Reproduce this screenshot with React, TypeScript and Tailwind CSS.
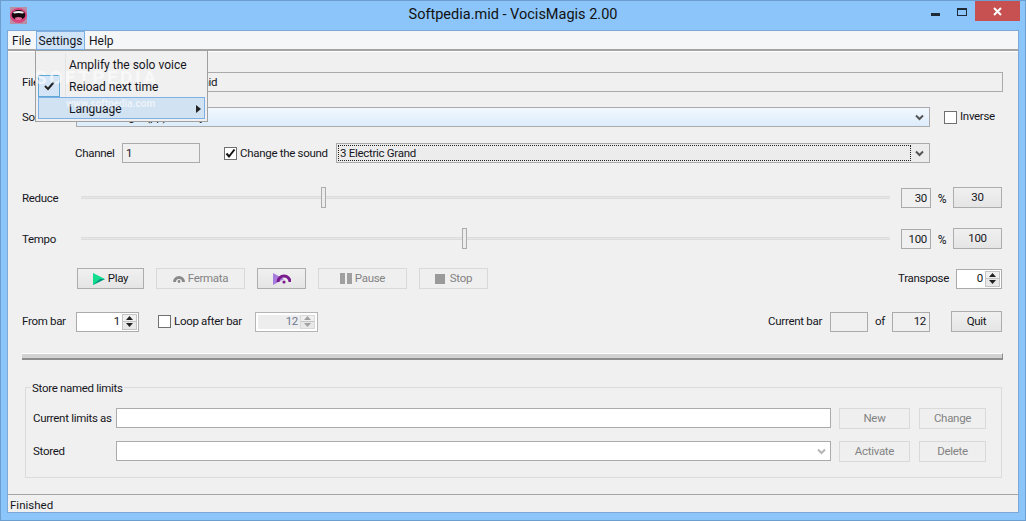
import React from "react";

const txt = "text-[#16161c]";

const Btn = ({ label, w, off, children }: any) => (
	<div
		className={`h-[21px] flex items-center justify-center gap-[3px] border ${w} ${
			off
				? "border-[#d9d9d9] bg-[#efefef] text-[#838383]"
				: "border-[#adadad] bg-gradient-to-b from-[#f0f0f0] to-[#e5e5e5] text-[#16161c]"
		}`}
	>
		{children}
		{label && <span>{label}</span>}
	</div>
);

const Check = ({ on }: any) => (
	<div className="w-[13px] h-[13px] border border-[#707070] bg-white flex items-center justify-center">
		{on && (
			<svg width="11" height="11" viewBox="0 0 11 11">
				<path d="M1.5 5.5 L4 8.5 L9.5 1.5" fill="none" stroke="#111" strokeWidth="2" />
			</svg>
		)}
	</div>
);

const Chevron = ({ color = "#555" }: any) => (
	<svg width="9" height="7" viewBox="0 0 9 7" className="shrink-0">
		<path d="M1 1.5 L4.5 5 L8 1.5" fill="none" stroke={color} strokeWidth="2" />
	</svg>
);

const Spin = ({ value, w, off }: any) => (
	<div
		className={`h-[20px] border flex items-stretch justify-end ${w} ${
			off ? "border-[#b5b5b5] bg-white p-[2px]" : "border-[#ababab] bg-white p-px"
		}`}
	>
		<div
			className={`flex-1 flex items-center justify-end pr-[2px] ${
				off ? "bg-[#ededed] text-[#6d7690]" : "text-[#16161c]"
			}`}
		>
			{value}
		</div>
		<div className={`w-[15px] flex flex-col border ${off ? "border-[#d9d9d9]" : "border-[#c4c4c4]"}`}>
			<div className="flex-1 flex items-center justify-center bg-[#f0f0f0] border-b border-[#c4c4c4]">
				<svg width="7" height="4" viewBox="0 0 7 4">
					<path d="M3.5 0 L7 4 L0 4 Z" fill={off ? "#a0a0a0" : "#222"} />
				</svg>
			</div>
			<div className="flex-1 flex items-center justify-center bg-[#e8e8e8]">
				<svg width="7" height="4" viewBox="0 0 7 4">
					<path d="M0 0 L7 0 L3.5 4 Z" fill={off ? "#a0a0a0" : "#222"} />
				</svg>
			</div>
		</div>
	</div>
);

const ReadOnly = ({ value, w, right, low }: any) => (
	<div
		className={`h-[20px] border border-[#ababab] flex items-center px-[3px] ${low ? "pt-[2px]" : ""} ${w} ${
			right ? "justify-end" : ""
		}`}
	>
		{value}
	</div>
);

const Slider = ({ pos }: any) => (
	<div className="relative w-[809px] h-[21px] flex items-center">
		<div className="w-full h-[3px] bg-[#e7e7e7] border-y border-[#dcdcdc]" />
		<div className={`absolute top-0 h-[21px] w-[5px] border border-[#ababab] bg-[#ececec] ${pos}`} />
	</div>
);

const Mouth = () => (
	<svg width="17" height="17" viewBox="0 0 17 17">
		<rect width="17" height="17" fill="#b98fa8" />
		<ellipse cx="8.5" cy="8.5" rx="8.5" ry="7.5" fill="#d8447e" />
		<ellipse cx="8.5" cy="8" rx="6.8" ry="5" fill="#14090e" />
		<path d="M3 5 Q8.5 3 14 5 L13 6.5 Q8.5 5.5 4 6.5 Z" fill="#f2f2f2" />
		<ellipse cx="8.5" cy="11.5" rx="3.5" ry="1.5" fill="#e86a98" />
	</svg>
);

export default function App() {
	return (
		<div
			className={`relative w-[1026px] h-[521px] overflow-hidden whitespace-nowrap flex flex-col bg-[#8bc5fa] border border-[#6c9fd0] font-['Roboto',sans-serif] text-[12px] ${txt}`}
		>
			{/* Title bar */}
			<div className="relative h-[29px] shrink-0 flex items-center justify-center pb-[1px] text-[14.5px] text-[#111]">
				<div className="absolute left-[9px] top-[6px]">
					<Mouth />
				</div>
				Softpedia.mid - VocisMagis 2.00
				<div className="absolute right-[5px] top-0 flex items-start">
					<div className="w-[9px] h-[3px] bg-[#1e2a35] mt-[12px]" />
					<div className="w-[10px] h-[8px] ml-[17px] mt-[7px] border border-[#1e2a35] border-t-[2px]" />
					<div className="w-[45px] h-[20px] ml-[8px] bg-[#c75050] flex items-center justify-center">
						<svg width="9" height="9" viewBox="0 0 9 9">
							<path d="M1 1 L8 8 M8 1 L1 8" stroke="#fff" strokeWidth="2" />
						</svg>
					</div>
				</div>
			</div>

			{/* Client */}
			<div className="mx-[6px] h-[483px] shrink-0 border border-[#7ba8d4] bg-[#f0f0f0] flex flex-col">
				<div className="h-[20px] shrink-0 bg-[#f5f6f8] border-b-2 border-[#a5a5a5] flex items-center pl-[1px]">
					<span className="w-[27px] pl-[3px] pt-px">File</span>
					<div className="w-[49px] h-[19px] pt-px bg-[#cfe4f9] border border-[#79b1e6] flex items-center justify-center">
						Settings
					</div>
					<span className="pl-[4px] pt-px">Help</span>
				</div>
				<div className="h-px bg-white shrink-0" />

				<div className="flex-1 pl-[14px] flex flex-col text-[11.5px] tracking-[-0.3px]">
					<div className="mt-[20px] h-[20px] flex items-center">
						<span className="w-[54px] pt-[2px]">File</span>
						<div className="w-[927px] h-[20px] border border-[#ababab] flex items-center pl-[3px] pt-[2px]">
							C:\Softpedia\\Softpedia.mid
						</div>
					</div>

					<div className="mt-[15px] h-[20px] flex items-center">
						<span className="w-[54px] pt-[2px]">Solo</span>
						<div className="w-[854px] h-[20px] border border-[#ababab] bg-gradient-to-b from-[#f2f8fe] to-[#dcecfb] flex items-center justify-between pl-[3px] pr-[5px]">
							<span className="pt-[2px]">2 Piano Right (pp) Melody</span>
							<Chevron />
						</div>
						<div className="ml-[14px]">
							<Check />
						</div>
						<span className="ml-[3px]">Inverse</span>
					</div>

					<div className="mt-[16px] h-[20px] flex items-center">
						<span className="ml-[53px] w-[47px] pt-[2px]">Channel</span>
						<ReadOnly value="1" w="w-[78px]" low />
						<div className="ml-[24px]">
							<Check on />
						</div>
						<span className="ml-[3px] w-[96px] pt-[2px]">Change the sound</span>
						<div className="w-[594px] h-[20px] border border-[#ababab] bg-[#ececec] flex items-center justify-between p-px pr-[5px]">
							<div className="w-[573px] h-[16px] border border-dotted border-[#222] flex items-center pl-px pt-[2px]">
								3 Electric Grand
							</div>
							<Chevron />
						</div>
					</div>

					<div className="mt-[24px] h-[21px] flex items-center">
						<span className="w-[59px] pt-[3px]">Reduce</span>
						<Slider pos="left-[240px]" />
						<div className="ml-[11px]">
							<ReadOnly value="30" w="w-[30px]" right low />
						</div>
						<span className="w-[22px] text-center text-[12px] pt-[2px]">%</span>
						<Btn label="30" w="w-[49px]" />
					</div>

					<div className="mt-[20px] h-[21px] flex items-center">
						<span className="w-[59px] pt-[3px]">Tempo</span>
						<Slider pos="left-[381px]" />
						<div className="ml-[11px]">
							<ReadOnly value="100" w="w-[30px]" right low />
						</div>
						<span className="w-[22px] text-center text-[12px] pt-[2px]">%</span>
						<Btn label="100" w="w-[49px]" />
					</div>

					<div className="mt-[19px] h-[21px] w-[980px] flex items-center">
						<div className="ml-[55px]">
							<Btn label="Play" w="w-[67px]">
								<svg width="12" height="12" viewBox="0 0 12 12">
									<path d="M0 0 L12 6 L0 12 Z" fill="#12dc8e" />
									<path d="M0 12 L12 6 L7 6 Z" fill="#0a8f86" />
								</svg>
							</Btn>
						</div>
						<div className="ml-[12px]">
							<Btn label="Fermata" w="w-[89px]" off>
								<svg width="12" height="9" viewBox="0 0 12 9">
									<path d="M1.5 8 A4.5 4.5 0 0 1 10.5 8" fill="none" stroke="#8a8a8a" strokeWidth="3" />
									<circle cx="6" cy="7.5" r="1.4" fill="#8a8a8a" />
								</svg>
							</Btn>
						</div>
						<div className="ml-[12px]">
							<Btn w="w-[49px]">
								<svg width="18" height="12" viewBox="0 0 18 12">
									<path d="M0 0 L11 6 L0 12 Z" fill="#a77bdc" />
									<path d="M5 9 A6 6 0 0 1 17 9" fill="none" stroke="#7a1a8c" strokeWidth="3" />
									<circle cx="11" cy="9" r="1.6" fill="#7a1a8c" />
								</svg>
							</Btn>
						</div>
						<div className="ml-[12px]">
							<Btn label="Pause" w="w-[89px]" off>
								<div className="flex gap-[2px]">
									<div className="w-[5px] h-[11px] bg-[#a0a0a0]" />
									<div className="w-[5px] h-[11px] bg-[#a0a0a0]" />
								</div>
							</Btn>
						</div>
						<div className="ml-[12px]">
							<Btn label="Stop" w="w-[69px]" off>
								<div className="w-[10px] h-[10px] mr-[2px] bg-[#9a9a9a]" />
							</Btn>
						</div>
						<span className="ml-auto mr-[7px]">Transpose</span>
						<Spin value="0" w="w-[46px]" />
					</div>

					<div className="mt-[22px] h-[21px] w-[980px] flex items-center">
						<span className="w-[54px]">From bar</span>
						<Spin value="1" w="w-[63px]" />
						<div className="ml-[19px]">
							<Check />
						</div>
						<span className="ml-[3px] w-[81px]">Loop after bar</span>
						<Spin value="12" w="w-[63px]" off />
						<span className="ml-auto mr-[8px]">Current bar</span>
						<ReadOnly value="" w="w-[38px]" />
						<span className="w-[24px] text-center">of</span>
						<ReadOnly value="12" w="w-[38px]" right />
						<div className="ml-[21px]">
							<Btn label="Quit" w="w-[51px]" />
						</div>
					</div>

					<div className="mt-[21px] h-[7px] w-[981px] border-t border-white bg-[#d2d2d2] border-b-2 border-b-[#8e8e8e] border-r border-r-[#8e8e8e]" />

					{/* Store named limits */}
					<div className="relative mt-[27px] ml-[3px] w-[977px] h-[91px] border border-[#dcdcdc] pl-[7px] pt-[20px]">
						<span className="absolute left-[5px] -top-[8px] bg-[#f0f0f0] px-px">Store named limits</span>
						<div className="flex items-start">
							<span className="w-[83px] h-[20px] leading-[20px]">Current limits as</span>
							<div className="w-[715px] h-[20px] border border-[#ababab] bg-white" />
							<div className="ml-[8px]">
								<Btn label="New" w="w-[71px]" off />
							</div>
							<div className="ml-[9px]">
								<Btn label="Change" w="w-[67px]" off />
							</div>
						</div>
						<div className="flex items-start mt-[12px]">
							<span className="w-[83px] h-[20px] leading-[20px]">Stored</span>
							<div className="w-[715px] h-[20px] border border-[#ababab] bg-white flex items-center justify-end pr-[4px]">
								<Chevron color="#b5b5b5" />
							</div>
							<div className="ml-[8px]">
								<Btn label="Activate" w="w-[71px]" off />
							</div>
							<div className="ml-[9px]">
								<Btn label="Delete" w="w-[67px]" off />
							</div>
						</div>
					</div>
				</div>

				<div className="h-[18px] shrink-0 border-t border-[#a5a5a5] flex items-center pl-[2px] pt-[4px] text-[11.5px]">Finished</div>
			</div>

			{/* Settings menu */}
			<div className="absolute left-[34px] top-[49px] w-[173px] h-[72px] bg-[#f0f0f0] border border-[#a0a0a0] p-[2px] flex flex-col">
				<div className="absolute left-[29px] top-[2px] bottom-[2px] w-px bg-[#e3e3e3]" />
				<div className="h-[22px] pl-[31px] pt-px flex items-center">Amplify the solo voice</div>
				<div className="relative h-[22px] pl-[31px] pt-px flex items-center">
					<div className="absolute left-0 top-0 w-[22px] h-[22px] bg-[#d3e5f6] border border-[#5ea9d6] flex items-center justify-center">
						<svg width="11" height="10" viewBox="0 0 11 10">
							<path d="M1 5 L4 8 L10 1" fill="none" stroke="#222" strokeWidth="2" />
						</svg>
					</div>
					Reload next time
				</div>
				<div className="relative h-[22px] bg-[#d1e2f2] border border-[#7db0e6] pl-[30px] pr-[3px] pt-px flex items-center justify-between">
					Language
					<svg width="5" height="8" viewBox="0 0 5 8">
						<path d="M0 0 L5 4 L0 8 Z" fill="#222" />
					</svg>
				</div>
			</div>

			{/* Watermark */}
			<div className="absolute left-[34px] top-[63px] text-[19px] tracking-[2.5px] font-bold text-white/60 pointer-events-none">
				SOFTPEDIA
			</div>
			<div className="absolute left-[65px] top-[95px] text-[10px] font-bold text-white/60 pointer-events-none">
				www.softpedia.com
			</div>
		</div>
	);
}
